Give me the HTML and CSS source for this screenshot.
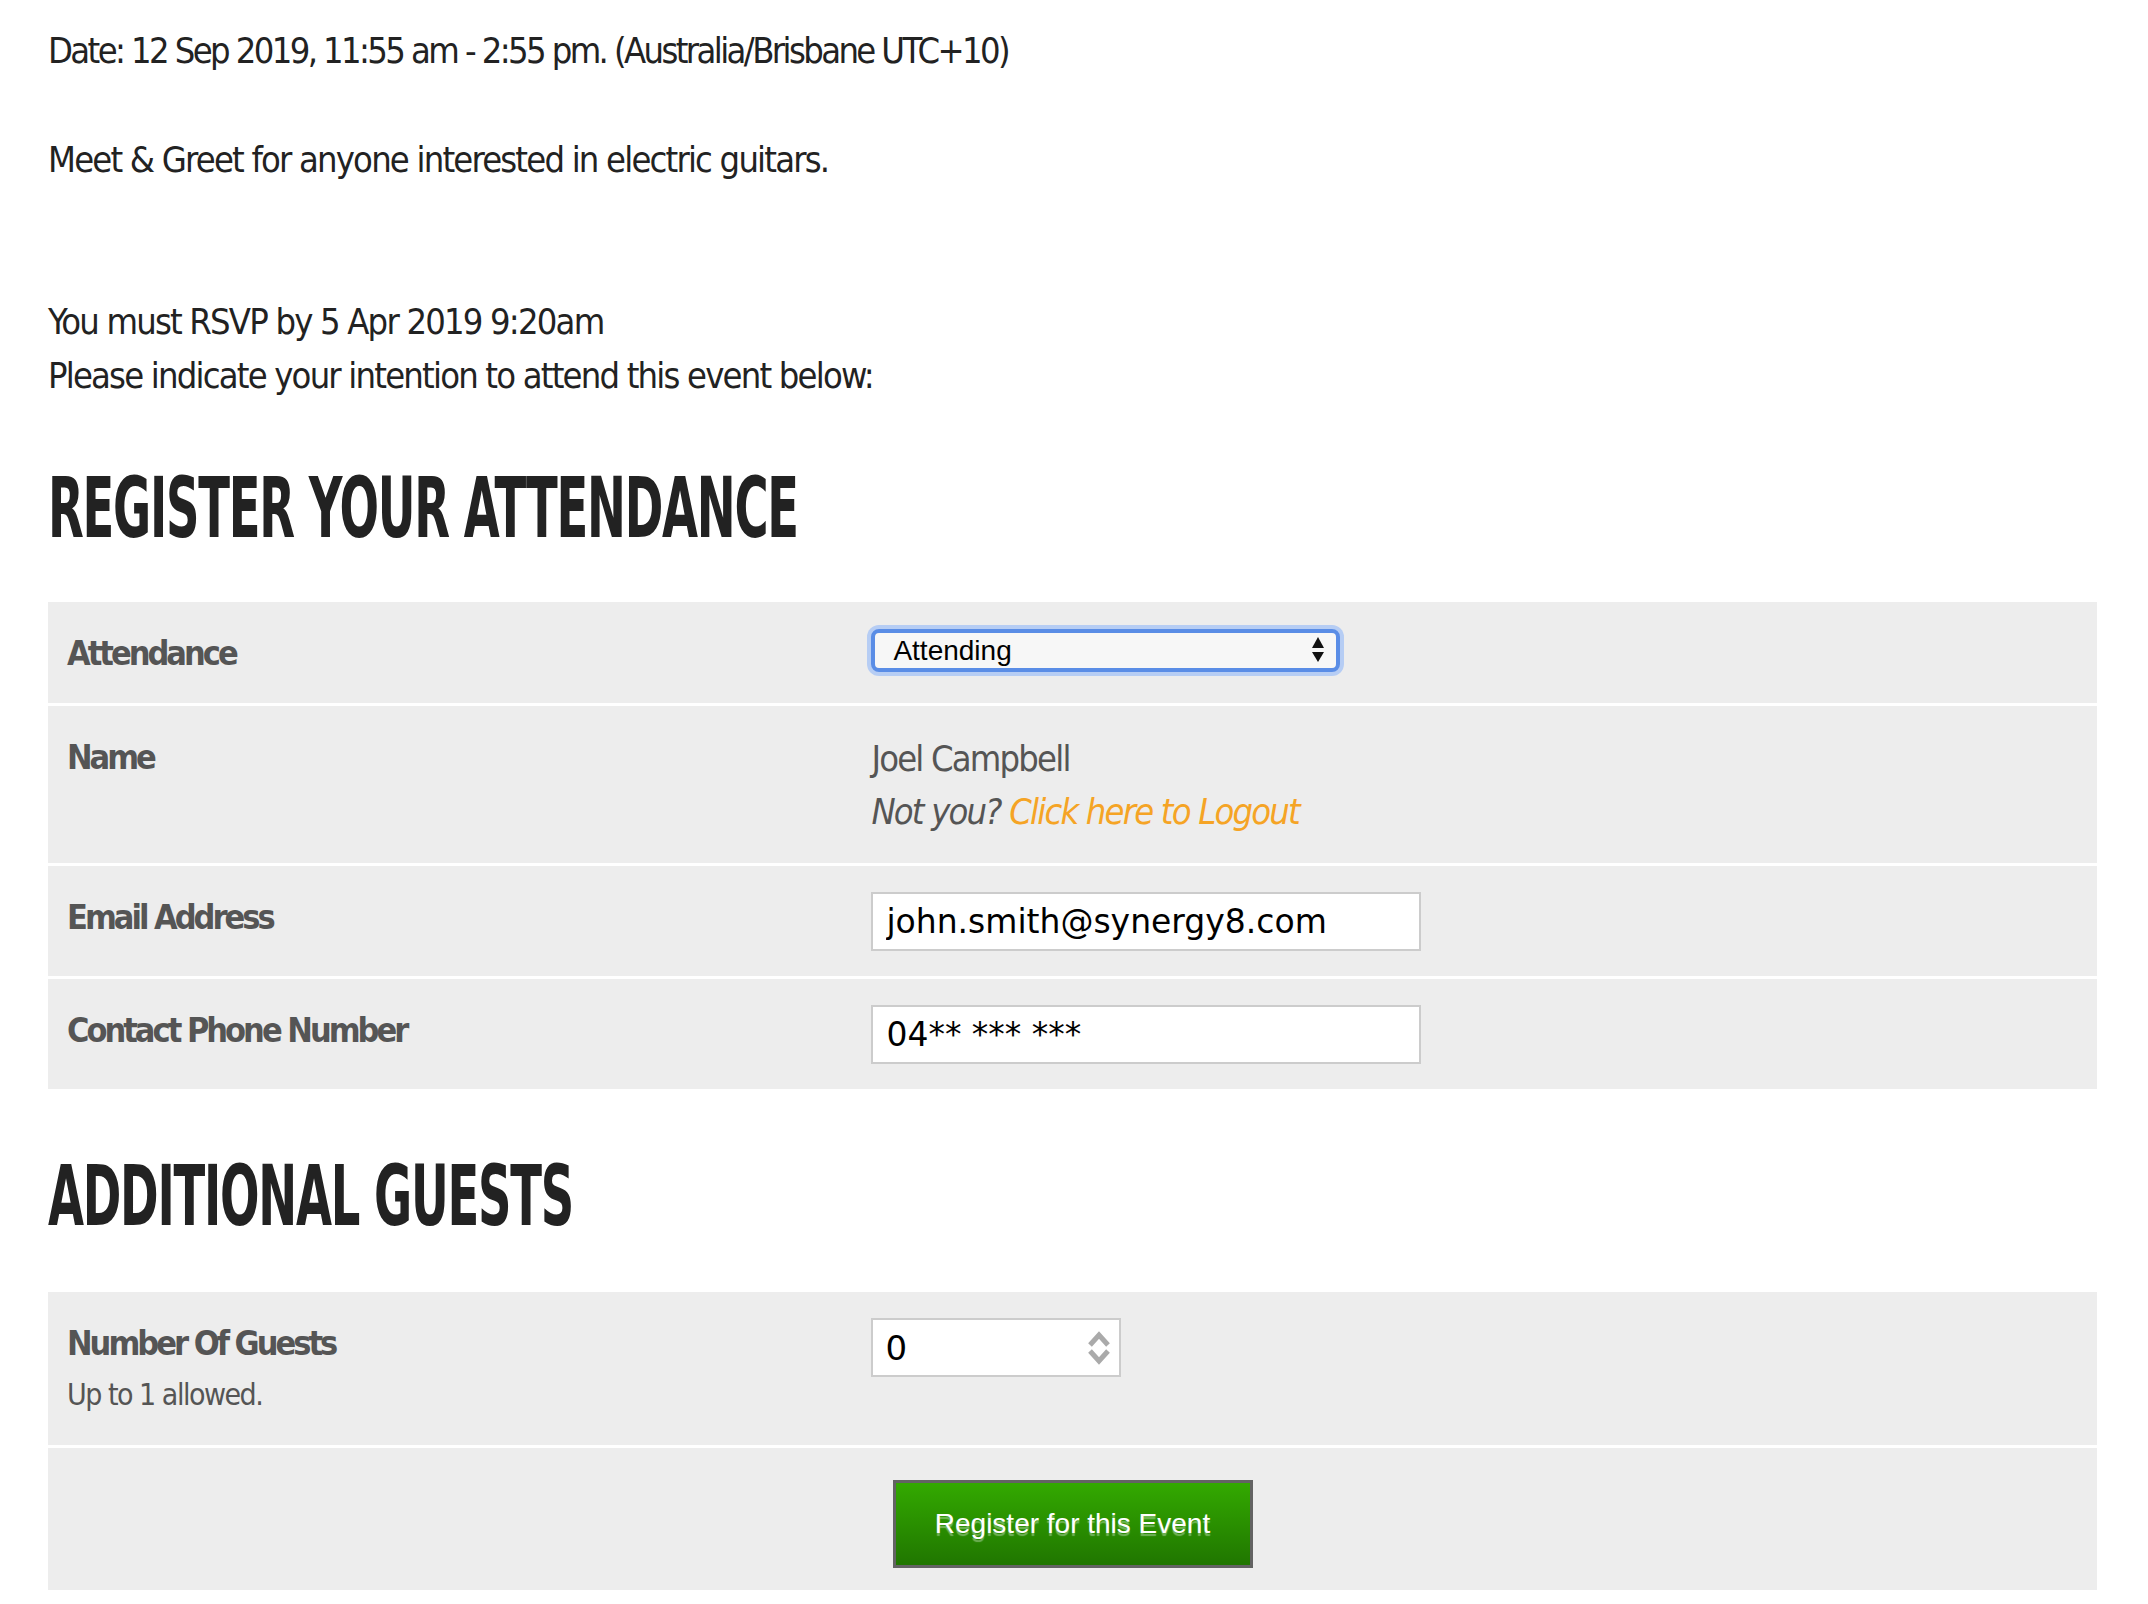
FILE: index.html
```html
<!DOCTYPE html>
<html lang="en">
<head>
    <meta charset="UTF-8">
    <meta name="viewport" content="width=device-width, initial-scale=1.0">
    <title>Event RSVP</title>
    <link rel="stylesheet" href="styles.css">
</head>
<body>
    <main class="page">
        <p class="event-date">Date: 12 Sep 2019, 11:55 am - 2:55 pm. (Australia/Brisbane UTC+10)</p>
        <p class="event-desc">Meet &amp; Greet for anyone interested in electric guitars.</p>
        <p class="rsvp-note">You must RSVP by 5 Apr 2019 9:20am<br>Please indicate your intention to attend this event below:</p>

        <h2 class="section-title">REGISTER YOUR ATTENDANCE</h2>
        <div class="form-table">
            <div class="form-row">
                <div class="form-label">Attendance</div>
                <div class="form-value">
                    <div class="select-wrap">
                        <select class="attend-select">
                            <option>Attending</option>
                            <option>Not Attending</option>
                        </select>
                        <svg class="select-arrows" width="12" height="25" viewBox="0 0 12 25">
                            <path d="M6 0 L12 11 L0 11 Z" fill="#111"/>
                            <path d="M6 25 L12 15 L0 15 Z" fill="#111"/>
                        </svg>
                    </div>
                </div>
            </div>
            <div class="form-row">
                <div class="form-label">Name</div>
                <div class="form-value">
                    <div class="user-name">Joel Campbell</div>
                    <div class="not-you">Not you? <a href="#" class="logout-link">Click here to Logout</a></div>
                </div>
            </div>
            <div class="form-row">
                <div class="form-label">Email Address</div>
                <div class="form-value">
                    <input class="text-input" type="text" value="john.smith@synergy8.com">
                </div>
            </div>
            <div class="form-row">
                <div class="form-label">Contact Phone Number</div>
                <div class="form-value">
                    <input class="text-input" type="text" value="04** *** ***">
                </div>
            </div>
        </div>

        <h2 class="section-title guests-title">ADDITIONAL GUESTS</h2>
        <div class="form-table">
            <div class="form-row">
                <div class="form-label">
                    Number Of Guests
                    <div class="form-hint">Up to 1 allowed.</div>
                </div>
                <div class="form-value">
                    <div class="number-field">
                        <input class="number-input" type="text" value="0">
                        <svg class="spin" width="24" height="34" viewBox="0 0 24 34">
                            <path d="M3 14 L12 4 L21 14" fill="none" stroke="#aaa" stroke-width="5"/>
                            <path d="M3 20 L12 30 L21 20" fill="none" stroke="#aaa" stroke-width="5"/>
                        </svg>
                    </div>
                </div>
            </div>
            <div class="form-row submit-row">
                <button class="register-btn">Register for this Event</button>
            </div>
        </div>
    </main>
</body>
</html>
```

FILE: styles.css
```css
body {
    margin: 0;
    background: #fff;
    color: #222;
    font-family: "DejaVu Sans Condensed", "DejaVu Sans", sans-serif;
    font-stretch: condensed;
}
.page {
    padding: 23px 51px 0 48px;
}
p {
    margin: 0;
    font-size: 36px;
    line-height: 56px;
    letter-spacing: -1.8px;
}
.event-date {
    letter-spacing: -2.6px;
}
.event-desc {
    margin-top: 53px;
}
.rsvp-note {
    margin-top: 107px;
    line-height: 54px;
}
.section-title {
    margin: 58px 0 47px;
    font-size: 84px;
    line-height: 94px;
    font-weight: bold;
    letter-spacing: -2px;
    color: #222;
    transform: scaleX(0.615);
    transform-origin: left center;
    white-space: nowrap;
}
.guests-title {
    margin-top: 60px;
    margin-bottom: 49px;
}
.form-table {
    display: flex;
    flex-direction: column;
    gap: 3px;
}
.form-row {
    display: grid;
    grid-template-columns: 40% 1fr;
    padding: 26px 19px 25px;
    background: #ededed;
}
.form-label {
    font-size: 34px;
    line-height: 50px;
    font-weight: bold;
    color: #555;
    letter-spacing: -3px;
}
.form-hint {
    margin-top: 2px;
    font-size: 30px;
    font-weight: normal;
    letter-spacing: -1.5px;
}
.form-value {
    font-size: 36px;
    color: #555;
    letter-spacing: -1.8px;
}
.user-name {
    line-height: 53px;
}
.not-you {
    line-height: 53px;
    font-style: italic;
}
.logout-link {
    color: #f5a425;
    text-decoration: none;
}
.select-wrap {
    position: relative;
    width: 469px;
    margin-top: 1px;
}
.attend-select {
    appearance: none;
    -webkit-appearance: none;
    box-sizing: border-box;
    display: block;
    width: 469px;
    height: 43px;
    padding: 0 18px;
    border: 4px solid #5a8de6;
    border-radius: 8px;
    box-shadow: 0 0 0 4px #b6cdf4;
    background: #f7f7f7;
    font-family: "Liberation Sans", sans-serif;
    font-size: 28px;
    letter-spacing: 0;
    color: #000;
    outline: none;
}
.select-arrows {
    position: absolute;
    right: 16px;
    top: 8px;
}
.text-input {
    box-sizing: border-box;
    width: 550px;
    height: 59px;
    padding: 0 13px;
    border: 2px solid #ccc;
    background: #fff;
    font-family: "DejaVu Sans", sans-serif;
    font-size: 33px;
    letter-spacing: 0;
    color: #000;
}
.number-field {
    box-sizing: border-box;
    display: flex;
    align-items: center;
    width: 250px;
    height: 59px;
    padding: 0 8px 0 12px;
    border: 2px solid #ccc;
    background: #fff;
}
.number-input {
    flex: 1;
    min-width: 0;
    border: none;
    padding: 0;
    font-family: "DejaVu Sans", sans-serif;
    font-size: 34px;
    color: #000;
    outline: none;
}
.submit-row {
    display: flex;
    justify-content: center;
    padding: 32px 19px 22px;
}
.register-btn {
    width: 360px;
    height: 88px;
    border: 3px solid #636363;
    background: linear-gradient(#33a900, #207600);
    color: #fff;
    font-family: "Liberation Sans", sans-serif;
    font-size: 28px;
    text-shadow: 0 3px 1px rgba(255, 255, 255, 0.35);
    cursor: pointer;
}
```
